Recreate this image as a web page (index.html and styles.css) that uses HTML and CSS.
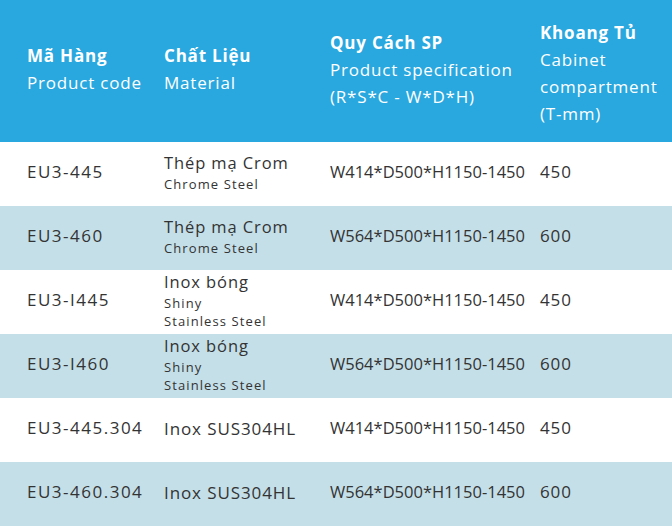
FILE: index.html
```html
<!DOCTYPE html>
<html>
<head>
<meta charset="utf-8">
<link rel="stylesheet" href="styles.css">
</head>
<body>
<div class="table">
  <div class="row head">
    <div class="cell c1"><b>Mã Hàng</b><span>Product code</span></div>
    <div class="cell c2"><b>Chất Liệu</b><span>Material</span></div>
    <div class="cell c3"><b>Quy Cách SP</b><span>Product specification</span><span>(R*S*C - W*D*H)</span></div>
    <div class="cell c4"><b>Khoang Tủ</b><span>Cabinet</span><span>compartment</span><span>(T-mm)</span></div>
  </div>
  <div class="row">
    <div class="cell c1">EU3-445</div>
    <div class="cell c2"><span class="main">Thép mạ Crom</span><span class="sub">Chrome Steel</span></div>
    <div class="cell c3">W414*D500*H1150-1450</div>
    <div class="cell c4">450</div>
  </div>
  <div class="row alt">
    <div class="cell c1">EU3-460</div>
    <div class="cell c2"><span class="main">Thép mạ Crom</span><span class="sub">Chrome Steel</span></div>
    <div class="cell c3">W564*D500*H1150-1450</div>
    <div class="cell c4">600</div>
  </div>
  <div class="row">
    <div class="cell c1">EU3-I445</div>
    <div class="cell c2"><span class="main">Inox bóng</span><span class="sub">Shiny</span><span class="sub">Stainless Steel</span></div>
    <div class="cell c3">W414*D500*H1150-1450</div>
    <div class="cell c4">450</div>
  </div>
  <div class="row alt">
    <div class="cell c1">EU3-I460</div>
    <div class="cell c2"><span class="main">Inox bóng</span><span class="sub">Shiny</span><span class="sub">Stainless Steel</span></div>
    <div class="cell c3">W564*D500*H1150-1450</div>
    <div class="cell c4">600</div>
  </div>
  <div class="row">
    <div class="cell c1">EU3-445.304</div>
    <div class="cell c2">Inox SUS304HL</div>
    <div class="cell c3">W414*D500*H1150-1450</div>
    <div class="cell c4">450</div>
  </div>
  <div class="row alt">
    <div class="cell c1">EU3-460.304</div>
    <div class="cell c2">Inox SUS304HL</div>
    <div class="cell c3">W564*D500*H1150-1450</div>
    <div class="cell c4">600</div>
  </div>
</div>
</body>
</html>
```
FILE: styles.css
```css
html, body {
  margin: 0;
  padding: 0;
  background: #ffffff;
}
body {
  font-family: "Open Sans", "Liberation Sans", sans-serif;
  color: #333333;
  width: 672px;
}
.table {
  display: flex;
  flex-direction: column;
}
.row {
  display: grid;
  grid-template-columns: 164px 166px 210px 132px;
  height: 64px;
  background: #ffffff;
  font-size: 17px;
  letter-spacing: 0.9px;
}
.row.alt {
  background: #c4dfe8;
}
.row .cell {
  padding-bottom: 5px;
}
.row .c2 {
  padding-bottom: 3px;
}
.row .c1 {
  letter-spacing: 1.5px;
}
.row .c3 {
  font-size: 16.5px;
  letter-spacing: 0;
}
.row.head {
  height: 142px;
  background: #29a7df;
  color: #ffffff;
  font-size: 17px;
  letter-spacing: 0.8px;
  line-height: 27px;
}
.row.head .cell {
  letter-spacing: 0.8px;
  padding-bottom: 4px;
}
.row.head .c3 {
  font-size: 17px;
}
.row.head .c4 {
  padding-top: 4px;
  padding-bottom: 0;
}
.cell {
  display: flex;
  flex-direction: column;
  justify-content: center;
  white-space: nowrap;
}
.c1 {
  padding-left: 27px;
}
.head b {
  font-weight: 700;
}
.main {
  font-size: 16.5px;
  line-height: 22.5px;
}
.sub {
  font-size: 13px;
  letter-spacing: 1.1px;
  line-height: 18px;
}
```
